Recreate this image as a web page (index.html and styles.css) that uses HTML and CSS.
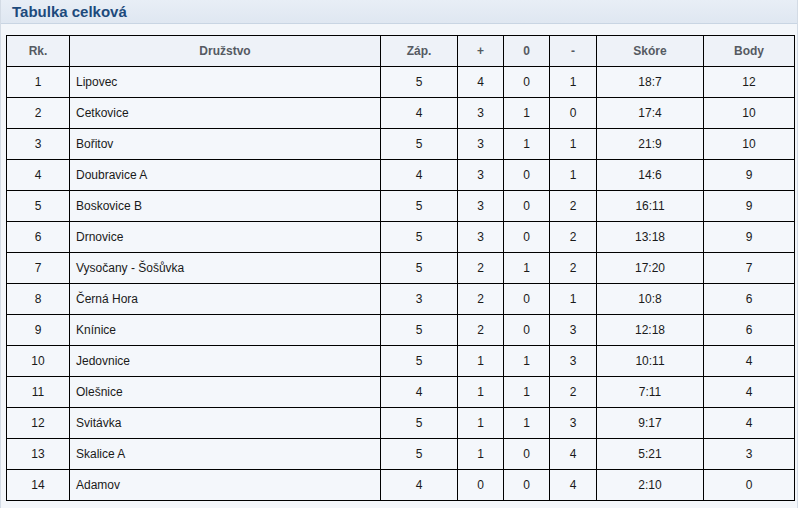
FILE: index.html
```html
<!DOCTYPE html>
<html lang="cs">
<head>
<meta charset="utf-8">
<title>Tabulka celková</title>
<link rel="stylesheet" href="styles.css">
</head>
<body>
<div class="panel">
  <div class="panel-head">Tabulka celková</div>
  <div class="panel-body">
    <table class="standings">
      <colgroup>
        <col class="c-rk"><col class="c-team"><col class="c-zap"><col class="c-w"><col class="c-d"><col class="c-l"><col class="c-score"><col class="c-pts">
      </colgroup>
      <thead>
        <tr><th>Rk.</th><th>Družstvo</th><th>Záp.</th><th>+</th><th>0</th><th>-</th><th>Skóre</th><th>Body</th></tr>
      </thead>
      <tbody>
        <tr><td>1</td><td class="team">Lipovec</td><td>5</td><td>4</td><td>0</td><td>1</td><td>18:7</td><td>12</td></tr>
        <tr><td>2</td><td class="team">Cetkovice</td><td>4</td><td>3</td><td>1</td><td>0</td><td>17:4</td><td>10</td></tr>
        <tr><td>3</td><td class="team">Bořitov</td><td>5</td><td>3</td><td>1</td><td>1</td><td>21:9</td><td>10</td></tr>
        <tr><td>4</td><td class="team">Doubravice A</td><td>4</td><td>3</td><td>0</td><td>1</td><td>14:6</td><td>9</td></tr>
        <tr><td>5</td><td class="team">Boskovice B</td><td>5</td><td>3</td><td>0</td><td>2</td><td>16:11</td><td>9</td></tr>
        <tr><td>6</td><td class="team">Drnovice</td><td>5</td><td>3</td><td>0</td><td>2</td><td>13:18</td><td>9</td></tr>
        <tr><td>7</td><td class="team">Vysočany - Šošůvka</td><td>5</td><td>2</td><td>1</td><td>2</td><td>17:20</td><td>7</td></tr>
        <tr><td>8</td><td class="team">Černá Hora</td><td>3</td><td>2</td><td>0</td><td>1</td><td>10:8</td><td>6</td></tr>
        <tr><td>9</td><td class="team">Knínice</td><td>5</td><td>2</td><td>0</td><td>3</td><td>12:18</td><td>6</td></tr>
        <tr><td>10</td><td class="team">Jedovnice</td><td>5</td><td>1</td><td>1</td><td>3</td><td>10:11</td><td>4</td></tr>
        <tr><td>11</td><td class="team">Olešnice</td><td>4</td><td>1</td><td>1</td><td>2</td><td>7:11</td><td>4</td></tr>
        <tr><td>12</td><td class="team">Svitávka</td><td>5</td><td>1</td><td>1</td><td>3</td><td>9:17</td><td>4</td></tr>
        <tr><td>13</td><td class="team">Skalice A</td><td>5</td><td>1</td><td>0</td><td>4</td><td>5:21</td><td>3</td></tr>
        <tr><td>14</td><td class="team">Adamov</td><td>4</td><td>0</td><td>0</td><td>4</td><td>2:10</td><td>0</td></tr>
      </tbody>
    </table>
  </div>
</div>
</body>
</html>
```
FILE: styles.css
```css
html, body {
  margin: 0;
  padding: 0;
  background: #ffffff;
}
body {
  font-family: "Liberation Sans", Arial, sans-serif;
  font-size: 12px;
  color: #111;
}
.panel {
  width: 798px;
  height: 508px;
  box-sizing: border-box;
  border-left: 1px solid #d3dbe5;
  border-right: 1px solid #d3dbe5;
  background: #f3f6fa;
}
.panel-head {
  height: 24px;
  box-sizing: border-box;
  border-bottom: 1px solid #c9d5e3;
  background: linear-gradient(#e8eef6, #dfe7f1);
  padding: 3px 0 0 11px;
  font-size: 15px;
  font-weight: bold;
  color: #1d4a7c;
  line-height: 18px;
}
.panel-body {
  padding: 11px 0 0 5px;
}
.standings {
  border-collapse: collapse;
  table-layout: fixed;
  width: 788px;
}
.c-rk { width: 63px; }
.c-team { width: 311px; }
.c-zap { width: 77px; }
.c-w { width: 46px; }
.c-d { width: 46px; }
.c-l { width: 47px; }
.c-score { width: 107px; }
.c-pts { width: 91px; }
.standings th,
.standings td {
  border: 1px solid #000;
  text-align: center;
  vertical-align: middle;
  padding: 0;
}
.standings th {
  height: 30px;
  background: #eef2f8;
  color: #555a62;
  font-weight: bold;
  font-size: 12px;
}
.standings td {
  height: 30px;
  background: #f4f7fb;
  color: #1a1a1a;
}
.standings td.team {
  text-align: left;
  padding-left: 6px;
}
```
